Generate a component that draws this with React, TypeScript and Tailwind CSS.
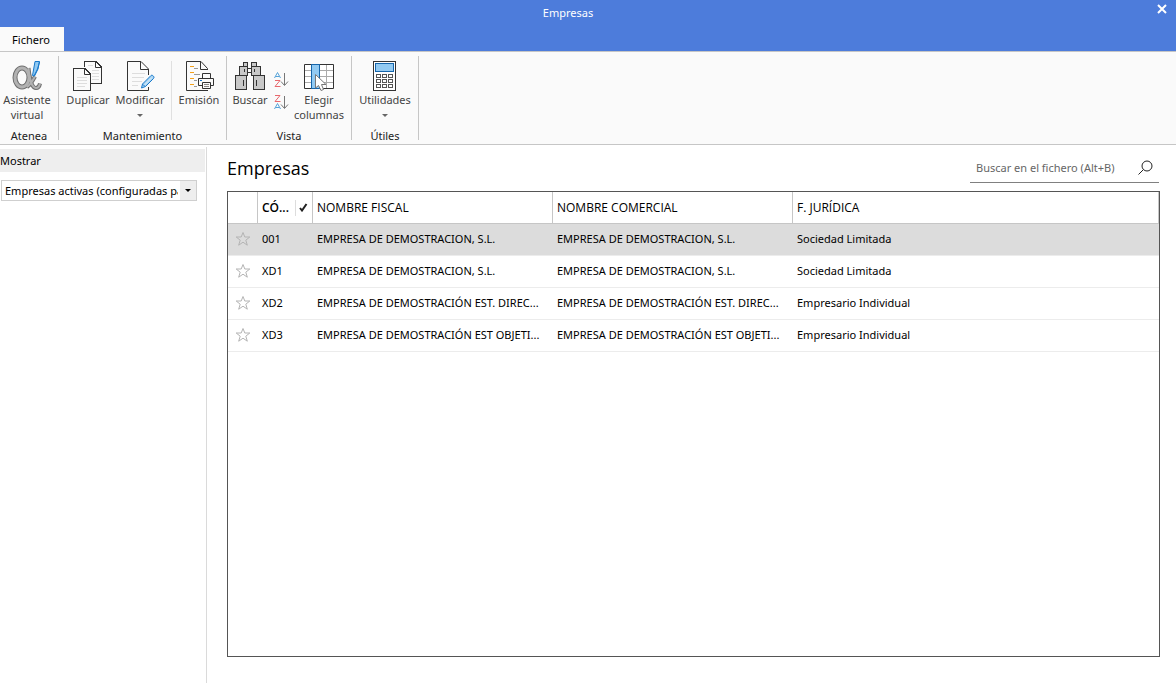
import type { ReactNode } from "react";

function AlphaIcon() {
  const strokes = "M17.500 8C18 14 20 28 25 28C27.500 28 28.500 26 29 23.500M24 16.500C21.500 21 19.500 25 16 27";
  return (
    <svg width="32" height="32" viewBox="0 0 32 32" fill="none">
      <g stroke="#6f6f6f" strokeWidth="4">
        <ellipse cx="11" cy="17.500" rx="7" ry="9.500" strokeWidth="5" />
        <path d={strokes} />
      </g>
      <g stroke="#b2b2b2" strokeWidth="2">
        <ellipse cx="11" cy="17.500" rx="7" ry="9.500" strokeWidth="3" />
        <path d={strokes} />
      </g>
      <path d="M24 1.500H28.500L27 9L23.500 16L21.500 15.500Z" fill="#92caf2" stroke="#1979ca" />
      <path d="M28.500 2L26.500 9L23 16" stroke="#1979ca" />
    </svg>
  );
}

function DuplicateIcon() {
  return (
    <svg width="32" height="32" viewBox="0 0 32 32" fill="none" stroke="#333" shapeRendering="crispEdges">
      <path d="M12.500 7V1.500H24L29.500 7V23.500H19" fill="#fafafa" />
      <path d="M23.500 2V7.500H29" shapeRendering="auto" />
      <path d="M20 10.500H27M20 13.500H27M20 16.500H27M20 19.500H27M16 5.500H21" stroke="#ddd" />
      <path d="M1.500 8.500H13L18.500 14V30.500H1.500Z" fill="#fafafa" />
      <path d="M12.500 9V14.500H18" shapeRendering="auto" />
      <path d="M5 17.500H15M5 20.500H15M5 23.500H15M5 26.500H13" stroke="#ddd" />
    </svg>
  );
}

function EditIcon() {
  return (
    <svg width="32" height="32" viewBox="0 0 32 32" fill="none" stroke="#333">
      <path d="M24.500 27V30.500H3.500V1.500H17L24.500 9V15" fill="#fafafa" />
      <path d="M16.500 2V9.500H24" />
      <path d="M8 13.500H21M8 17.500H20M8 21.500H18M8 25.500H14" stroke="#ddd" />
      <path d="M18.500 24L27 15.500C28.500 14.500 31 17 29.500 18.500L21.500 26.500L17.500 28Z" fill="#a6d3f3" stroke="#1979ca" />
      <path d="M19 24.500L21 26.500" stroke="#1979ca" />
      <path d="M20.500 25L28 17.500" stroke="#e0f1fc" />
    </svg>
  );
}

function PrintIcon() {
  return (
    <svg width="32" height="32" viewBox="-1 0 32 32" fill="none" stroke="#333">
      <path d="M24 30.500H2.500V1.500H17L23.500 8.500V10" fill="#fafafa" />
      <path d="M16.500 2V9.500H23" />
      <path d="M6 6.500H10M6 12.500H10M6 18.500H10M6 24.500H10" stroke="#f5a11a" />
      <path d="M10 8.500H14M10 14.500H16M10 20.500H13M10 26.500H13" stroke="#999" />
      <path d="M18.500 18V13.500H26.500V18M18 25.500H14.500V18.500H29.500V25.500H27" fill="#fafafa" />
      <path d="M18.500 22.500H26.500V28.500H18.500Z" fill="#fafafa" />
      <path d="M16 20.500H18" stroke="#1979ca" />
      <path d="M20 24.500H25M20 26.500H25" stroke="#888" />
    </svg>
  );
}

function BinocularsIcon() {
  return (
    <svg width="32" height="32" viewBox="0 0 32 32" fill="#c8c8c8" stroke="#333" shapeRendering="crispEdges">
      <path d="M9.500 2.500H13.500V6.500H9.500ZM17.500 2.500H22.500V6.500H17.500Z" />
      <path d="M5.500 6.500H13.500V15.500H5.500ZM17.500 6.500H26.500V15.500H17.500Z" />
      <path d="M1.500 15.500H12.500V29.500H1.500ZM19.500 15.500H30.500V29.500H19.500Z" />
      <path d="M13.500 8.500H17.500V12.500H13.500Z" fill="#fafafa" />
      <path d="M9.500 20V26M22.500 20V26M10.500 9V12M20.500 9V12" />
    </svg>
  );
}

function SortIcon({ descending = false }: { descending?: boolean }) {
  const a = <path d="M0.500 6L3.500 0.500L6.500 6M1.500 4.500H5.500" stroke="#56a3d8" />;
  const z = <path d="M1 0.500H6L1 6.500H6.500" stroke="#e8686d" />;
  return (
    <svg width="16" height="17" viewBox="0 0 16 17" fill="none">
      <g transform="translate(0 1)">{descending ? z : a}</g>
      <g transform="translate(0 9)">{descending ? a : z}</g>
      <path d="M10.500 2V14M7 10.500L10.500 14.500L14 10.500" stroke="#777" />
    </svg>
  );
}

function ColumnsIcon() {
  return (
    <svg width="32" height="32" viewBox="0 0 32 32" fill="none">
      <path d="M1.500 4.500H30.500V28.500H1.500Z" fill="#fff" stroke="#333" />
      <path d="M2 10.500H30M2 16.500H30M2 22.500H30M23.500 5V28" stroke="#aaa" />
      <path d="M8.500 4.500H16.500V28.500H8.500Z" fill="#92caf2" stroke="#1565ab" />
      <path d="M12.500 14.500V28L15.500 25.500L18 30.500L20.500 29.500L18.500 24.500H23Z" fill="#fff" stroke="#777" />
    </svg>
  );
}

function CalculatorIcon() {
  return (
    <svg width="32" height="32" viewBox="0 0 32 32" fill="none" shapeRendering="crispEdges">
      <path d="M4.500 1.500H26.500V30.500H4.500Z" fill="#fff" stroke="#333" />
      <path d="M6.500 3.500H24.500V11.500H6.500Z" fill="#92caf2" stroke="#1565ab" />
      {[14.5, 19.5, 24.5].map((y) =>
        [7.5, 13.5, 19.5].map((x) => <rect key={`${x}-${y}`} x={x} y={y} width="4" height="3" stroke="#555" />),
      )}
    </svg>
  );
}

function Caret() {
  return (
    <svg className="mt-[7px]" width="6" height="3" viewBox="0 0 6 3">
      <path d="M0 0H6L3 3Z" fill="#666" />
    </svg>
  );
}

function RibbonButton({ icon, lines, menu, className }: { icon: ReactNode; lines: string[]; menu?: boolean; className: string }) {
  return (
    <button type="button" className={`flex shrink-0 flex-col items-center ${className}`}>
      {icon}
      <span className="text-[11px] leading-[15px] whitespace-nowrap text-[#444]">
        {lines.map((line) => (
          <span key={line} className="block">{line}</span>
        ))}
      </span>
      {menu && <Caret />}
    </button>
  );
}

function RibbonGroup({ label, children, className }: { label: string; children: ReactNode; className: string }) {
  return (
    <section aria-label={label} className={`h-[84px] shrink-0 border-r border-[#c6c6c6] ${className}`}>
      <div className="flex h-[74px] items-start pt-1">{children}</div>
      <h2 className="text-center text-[11px] leading-3 text-[#222]">{label}</h2>
    </section>
  );
}

function Star() {
  return (
    <svg className="mx-auto mb-px block" width="16" height="16" viewBox="0 0 16 16" fill="none" stroke="#b4b4b4">
      <path d="M8 1.500L9.800 6H14.800L10.800 9.200L12.300 14.200L8 11.200L3.700 14.200L5.200 9.200L1.200 6H6.200Z" />
    </svg>
  );
}

const companies = [
  { code: "001", name: "EMPRESA DE DEMOSTRACION, S.L.", form: "Sociedad Limitada" },
  { code: "XD1", name: "EMPRESA DE DEMOSTRACION, S.L.", form: "Sociedad Limitada" },
  { code: "XD2", name: "EMPRESA DE DEMOSTRACIÓN EST. DIREC...", form: "Empresario Individual" },
  { code: "XD3", name: "EMPRESA DE DEMOSTRACIÓN EST OBJETI...", form: "Empresario Individual" },
];

export default function App() {
  return (
    <div className="flex min-h-screen flex-col bg-white font-['Noto_Sans','Open_Sans',sans-serif] text-xs text-black">
      <header className="bg-[#4d7cdb]">
        <div className="grid h-[27px] grid-cols-[1fr_auto_1fr] items-center">
          <span />
          <span className="pr-10 text-[11px] text-white">Empresas</span>
          <button type="button" aria-label="Cerrar" className="mr-2 mb-2.5 justify-self-end text-white">
            <svg width="12" height="12" viewBox="0 0 12 12" fill="none" stroke="currentColor" strokeWidth="2">
              <path d="M2 2L10 10M10 2L2 10" />
            </svg>
          </button>
        </div>
        <button type="button" className="block h-6 w-16 bg-[#fafafa] pt-0.5 pr-0.5 text-[11px]">Fichero</button>
      </header>

      <div className="flex border-y border-[#c6c6c6] bg-[#fafafa] pt-1 pb-1">
        <RibbonGroup label="Atenea" className="w-[59px]">
          <RibbonButton icon={<AlphaIcon />} lines={["Asistente", "virtual"]} className="w-[54px]" />
        </RibbonGroup>
        <RibbonGroup label="Mantenimiento" className="w-[168px]">
          <RibbonButton icon={<DuplicateIcon />} lines={["Duplicar"]} className="w-[58px]" />
          <RibbonButton icon={<EditIcon />} lines={["Modificar"]} menu className="w-[46px]" />
          <div className="ml-2 mt-px h-[59px] w-px bg-[#e0e0e0]" />
          <RibbonButton icon={<PrintIcon />} lines={["Emisión"]} className="w-[54px]" />
        </RibbonGroup>
        <RibbonGroup label="Vista" className="w-[125px]">
          <RibbonButton icon={<BinocularsIcon />} lines={["Buscar"]} className="w-[46px]" />
          <div className="mt-[11px] ml-px flex flex-col gap-1.5">
            <button type="button" aria-label="Orden ascendente"><SortIcon /></button>
            <button type="button" aria-label="Orden descendente"><SortIcon descending /></button>
          </div>
          <RibbonButton icon={<ColumnsIcon />} lines={["Elegir", "columnas"]} className="w-[58px]" />
        </RibbonGroup>
        <RibbonGroup label="Útiles" className="w-[67px]">
          <RibbonButton icon={<CalculatorIcon />} lines={["Utilidades"]} menu className="w-[66px]" />
        </RibbonGroup>
      </div>

      <div className="flex flex-1 pt-0.5">
        <aside className="w-[207px] shrink-0 border-r border-[#dadada] pt-0.5 pr-px">
          <label htmlFor="filter" className="block h-[23px] bg-[#eee] text-[11px] leading-6">Mostrar</label>
          <div className="relative mt-2 mr-2 ml-px h-[21px] border border-[#cfcfcf]">
            <select id="filter" className="block h-full w-full appearance-none bg-white pt-px pr-[18px] pl-[3px] text-[11px] outline-none">
              <option>Empresas activas (configuradas para</option>
            </select>
            <div className="pointer-events-none absolute inset-y-0 right-0 flex w-4 items-center justify-center bg-[#eee]">
              <svg width="6" height="3" viewBox="0 0 6 3"><path d="M0 0H6L3 3Z" fill="#000" /></svg>
            </div>
          </div>
        </aside>

        <main className="flex min-w-0 flex-1 flex-col pr-4 pb-[26px] pl-5">
          <div className="mb-2 flex h-9 items-end justify-between">
            <h1 className="pb-0.5 font-['Open_Sans',sans-serif] text-lg leading-[26px]">Empresas</h1>
            <div className="mr-px flex h-[30px] w-[189px] items-center border-b border-[#808080] pt-px pr-1 pl-1.5">
              <input type="search" aria-label="Buscar en el fichero" placeholder="Buscar en el fichero (Alt+B)" className="min-w-0 flex-1 text-[11px] outline-none placeholder:text-[#666]" />
              <button type="button" aria-label="Buscar">
                <svg width="17" height="16" viewBox="0 0 17 16" fill="none" stroke="#222">
                  <circle cx="9" cy="6" r="5" />
                  <path d="M5.500 9.500L0.500 14.500" />
                </svg>
              </button>
            </div>
          </div>
          <div className="flex-1 border border-[#555]">
            <table className="w-full table-fixed border-separate border-spacing-0 text-left">
              <colgroup>
                <col className="w-[30px]" />
                <col className="w-[55px]" />
                <col className="w-[240px]" />
                <col className="w-[240px]" />
                <col />
              </colgroup>
              <thead className="font-['Open_Sans',sans-serif]">
                <tr className="h-8 *:border-r *:border-b *:border-[#c6c6c6] *:px-1 *:py-0 *:font-normal">
                  <th aria-label="Favorita" />
                  <th>
                    <div className="flex items-center justify-between">
                      <span className="font-semibold">CÓ...</span>
                      <span className="flex h-4 items-center border-l border-[#ddd] pl-[3px]">
                        <svg width="9" height="9" viewBox="0 0 9 9" fill="none" stroke="#222" strokeWidth="2"><path d="M1 5L3 7.500L7.500 1" /></svg>
                      </span>
                    </div>
                  </th>
                  <th>NOMBRE FISCAL</th>
                  <th>NOMBRE COMERCIAL</th>
                  <th>F. JURÍDICA</th>
                </tr>
              </thead>
              <tbody className="text-[11px]">
                {companies.map((c) => (
                  <tr key={c.code} className="h-8 *:whitespace-nowrap *:border-b *:border-[#ececec] *:py-0 *:pl-1 first:bg-[#dcdcdc]">
                    <td className="pr-1"><Star /></td>
                    <td>{c.code}</td>
                    <td>{c.name}</td>
                    <td>{c.name}</td>
                    <td>{c.form}</td>
                  </tr>
                ))}
              </tbody>
            </table>
          </div>
        </main>
      </div>
    </div>
  );
}
